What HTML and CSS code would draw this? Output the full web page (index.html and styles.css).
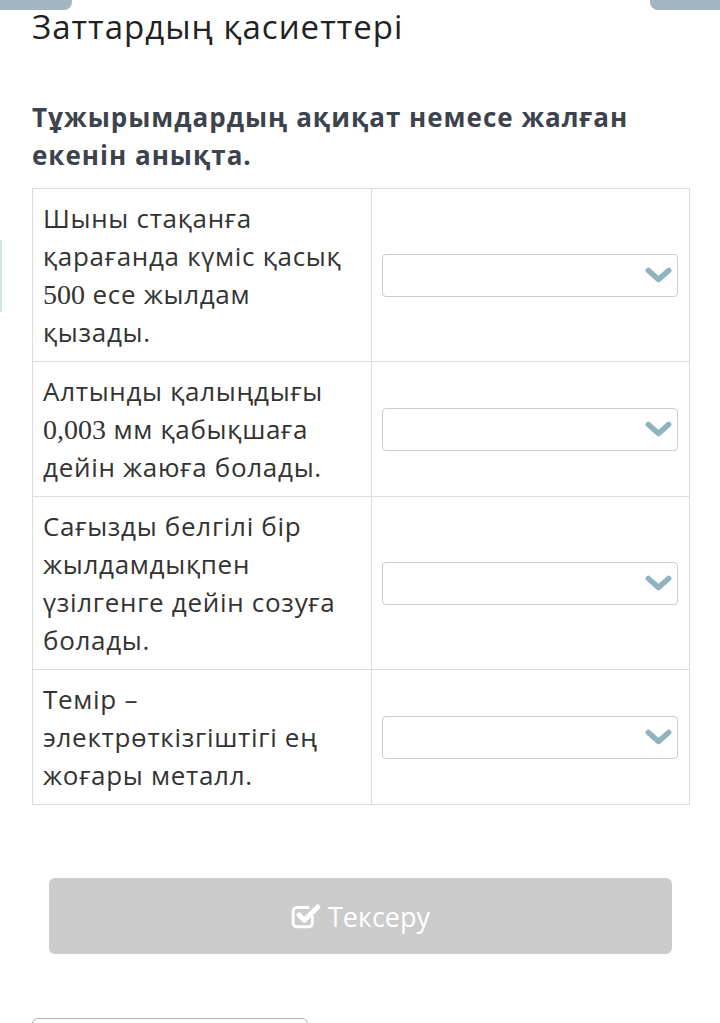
FILE: index.html
```html
<!DOCTYPE html>
<html lang="kk">
<head>
<meta charset="utf-8">
<title>Заттардың қасиеттері</title>
<link rel="stylesheet" href="styles.css">
</head>
<body>
<div class="topbar"><span class="tab"></span><span class="tab"></span></div>
<span class="side-tab"></span>
<main class="page">
  <h1 class="title">Заттардың қасиеттері</h1>
  <h2 class="question">Тұжырымдардың ақиқат немесе жалған екенін анықта.</h2>
  <table class="tf">
    <tr>
      <td class="stmt">Шыны стақанға қарағанда күміс қасық <span class="num">500</span> есе жылдам қызады.</td>
      <td class="ans"><div class="select"><svg class="chev" viewBox="0 0 24 16"><path d="M3 4 L12 12 L21 4" fill="none" stroke="#8fb4c0" stroke-width="5" stroke-linecap="round" stroke-linejoin="round"/></svg></div></td>
    </tr>
    <tr>
      <td class="stmt">Алтынды қалыңдығы <span class="num">0,003</span> мм қабықшаға дейін жаюға болады.</td>
      <td class="ans"><div class="select"><svg class="chev" viewBox="0 0 24 16"><path d="M3 4 L12 12 L21 4" fill="none" stroke="#8fb4c0" stroke-width="5" stroke-linecap="round" stroke-linejoin="round"/></svg></div></td>
    </tr>
    <tr>
      <td class="stmt">Сағызды белгілі бір жылдамдықпен үзілгенге дейін созуға болады.</td>
      <td class="ans"><div class="select"><svg class="chev" viewBox="0 0 24 16"><path d="M3 4 L12 12 L21 4" fill="none" stroke="#8fb4c0" stroke-width="5" stroke-linecap="round" stroke-linejoin="round"/></svg></div></td>
    </tr>
    <tr>
      <td class="stmt">Темір – электрөткізгіштігі ең жоғары металл.</td>
      <td class="ans"><div class="select"><svg class="chev" viewBox="0 0 24 16"><path d="M3 4 L12 12 L21 4" fill="none" stroke="#8fb4c0" stroke-width="5" stroke-linecap="round" stroke-linejoin="round"/></svg></div></td>
    </tr>
  </table>
  <button class="check" type="button"><svg class="chk" viewBox="0 0 28 26"><path d="M20 13v6.5a3.5 3.5 0 0 1-3.5 3.5h-11A3.5 3.5 0 0 1 2 19.5v-11A3.5 3.5 0 0 1 5.5 5H17" fill="none" stroke="#fff" stroke-width="2.8"/><path d="M7.5 12l5 5L25 4.5" fill="none" stroke="#fff" stroke-width="4.6" stroke-linecap="round" stroke-linejoin="round"/></svg><span>Тексеру</span></button>
  <div class="bottom-box"></div>
</main>
</body>
</html>
```

FILE: styles.css
```css
* { box-sizing: border-box; }
html, body { margin: 0; padding: 0; background: #fff; }
body { font-family: "Open Sans", "Noto Sans", sans-serif; color: #333; overflow: hidden; height: 1023px; position: relative; }

.topbar { display: flex; justify-content: space-between; height: 10px; }
.tab { display: block; width: 72px; height: 10px; background: #a2b5c3; }
.tab:first-child { border-bottom-right-radius: 8px; }
.tab:last-child { width: 70px; border-bottom-left-radius: 8px; }

.side-tab { position: absolute; left: 0; top: 240px; width: 2px; height: 72px; background: #d4e4e4; }

.page { padding: 0 30px 0 32px; }

.title { margin: -2px 0 0; font-weight: 400; font-size: 33px; line-height: 38px; color: #222; letter-spacing: 1px; }

.question { margin: 52px 0 0; font-weight: 700; font-size: 26px; line-height: 38px; color: #3d434d; letter-spacing: 1px; }

.tf { margin-top: 14px; width: 658px; border-collapse: collapse; table-layout: fixed; }
.tf td { border: 1px solid #dcdcdc; vertical-align: middle; }
.stmt { width: 339px; padding: 10px 10px; font-size: 26px; line-height: 38px; color: #333; letter-spacing: 0.7px; }
.num { font-family: "Liberation Serif", "DejaVu Serif", serif; font-size: 28px; line-height: 1; letter-spacing: 0; }
.ans { padding: 0 11px 0 10px; }
.select { height: 43px; border: 1px solid #ccc; border-radius: 4px; display: flex; align-items: center; justify-content: flex-end; padding-right: 5px; }
.chev { width: 27px; height: 18px; }

.check { display: flex; align-items: center; justify-content: center; gap: 7px; width: 623px; height: 76px; margin: 73px 0 0 17px; border: 0; border-radius: 6px; background: #cbcbcb; color: #fff; font-family: "Open Sans", sans-serif; font-size: 27px; padding: 0; }
.chk { width: 30px; height: 28px; }

.bottom-box { margin-top: 64px; width: 276px; height: 30px; border: 1px solid #a9b3b8; border-radius: 6px; }
```
